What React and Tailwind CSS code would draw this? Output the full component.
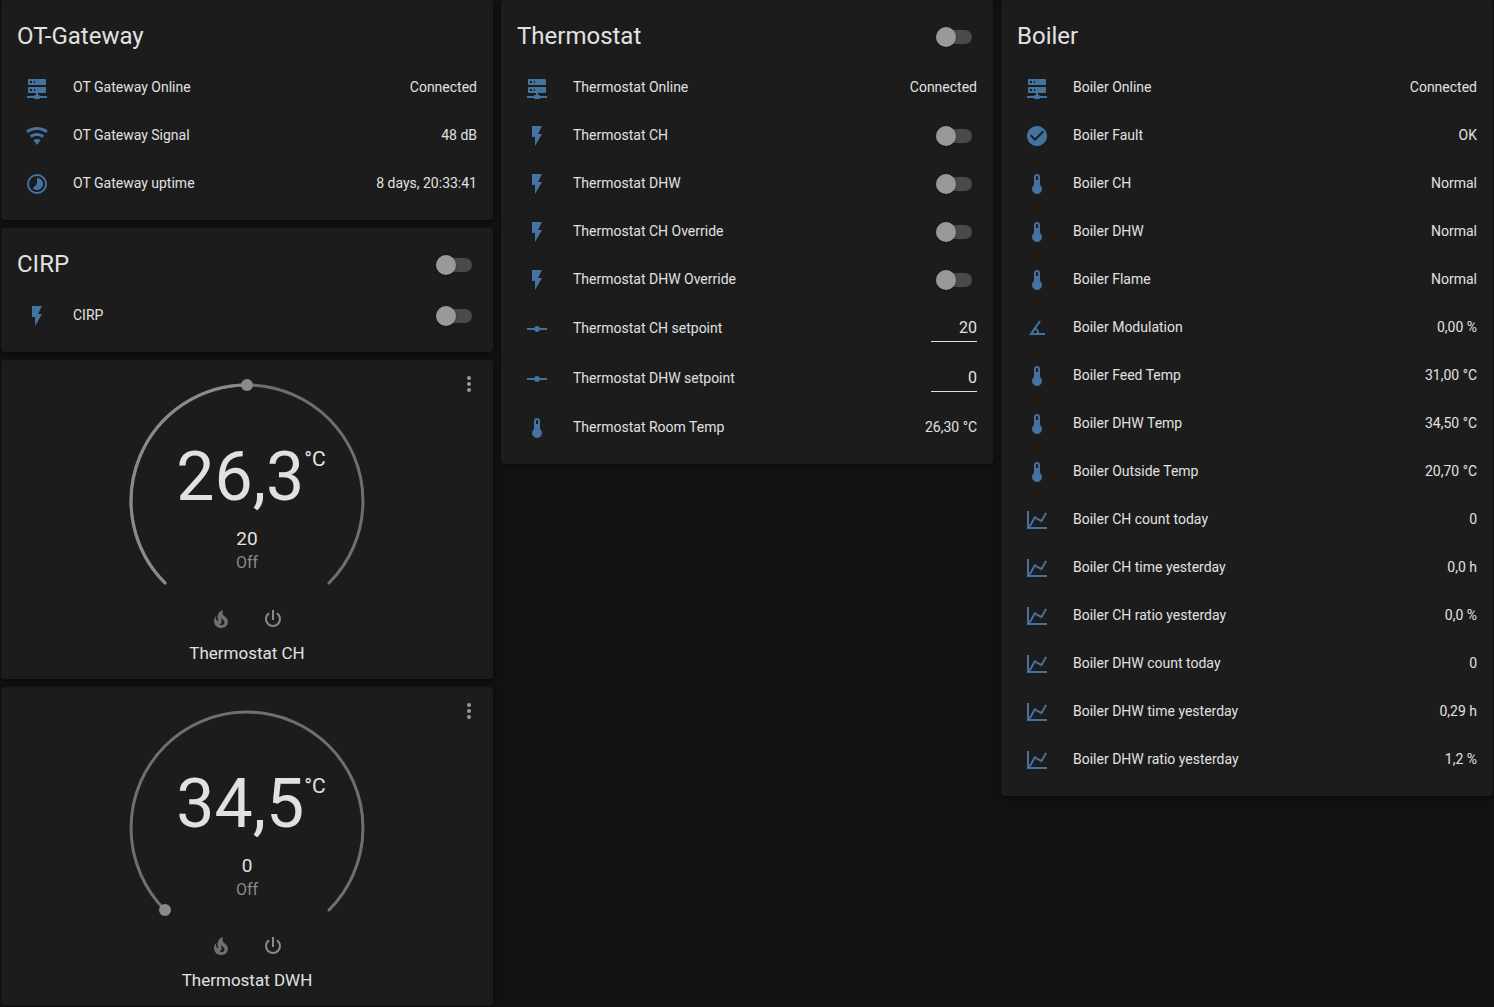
import React, { useId } from "react";

const ICONS = {
  server:
    "M13,19H14A1,1 0 0,1 15,20H22V22H15A1,1 0 0,1 14,23H10A1,1 0 0,1 9,22H2V20H9A1,1 0 0,1 10,19H11V17H4A1,1 0 0,1 3,16V12A1,1 0 0,1 4,11H20A1,1 0 0,1 21,12V16A1,1 0 0,1 20,17H13V19M4,3H20A1,1 0 0,1 21,4V8A1,1 0 0,1 20,9H4A1,1 0 0,1 3,8V4A1,1 0 0,1 4,3M9,7H10V5H9V7M9,15H10V13H9V15M5,5V7H7V5H5M5,13V15H7V13H5Z",
  wifi: "M12,21L15.6,16.2C14.6,15.45 13.35,15 12,15C10.65,15 9.4,15.45 8.4,16.2L12,21M12,3C7.95,3 4.21,4.34 1.2,6.6L3,9C5.5,7.12 8.62,6 12,6C15.38,6 18.5,7.12 21,9L22.8,6.6C19.79,4.34 16.05,3 12,3M12,9C9.3,9 6.81,9.89 4.8,11.4L6.6,13.8C8.1,12.67 9.97,12 12,12C14.03,12 15.9,12.67 17.4,13.8L19.2,11.4C17.19,9.89 14.7,9 12,9Z",
  timelapse:
    "M16.24,7.76C15.07,6.58 13.53,6 12,6V12L7.76,16.24C10.1,18.58 13.9,18.58 16.24,16.24C18.59,13.9 18.59,10.1 16.24,7.76M12,2A10,10 0 0,0 2,12A10,10 0 0,0 12,22A10,10 0 0,0 22,12A10,10 0 0,0 12,2M12,20A8,8 0 0,1 4,12A8,8 0 0,1 12,4A8,8 0 0,1 20,12A8,8 0 0,1 12,20Z",
  flash: "M7,2V13H10V22L17,10H13L17,2H7Z",
  ray: "M2,11H9.17C9.58,9.83 10.69,9 12,9C13.31,9 14.42,9.83 14.83,11H22V13H14.83C14.42,14.17 13.31,15 12,15C10.69,15 9.58,14.17 9.17,13H2V11Z",
  thermometer:
    "M15,13V5A3,3 0 0,0 9,5V13A5,5 0 1,0 15,13M12,4A1,1 0 0,1 13,5V8H11V5A1,1 0 0,1 12,4Z",
  check:
    "M12 2C6.5 2 2 6.5 2 12S6.5 22 12 22 22 17.5 22 12 17.5 2 12 2M10 17L5 12L6.41 10.59L10 14.17L17.59 6.58L19 8L10 17Z",
  angle:
    "M20,19H4.09L14.18,4.43L15.82,5.57L11.28,12.13C12.89,12.96 14,14.62 14,16.54C14,16.7 14,16.85 13.97,17H20V19M7.91,17H11.96C12,16.85 12,16.7 12,16.54C12,15.28 11.24,14.22 10.14,13.78L7.91,17Z",
  chart:
    "M16,11.78L20.24,4.45L21.97,5.45L16.74,14.5L10.23,10.75L5.46,19H22V21H2V3H4V17.54L9.5,8L16,11.78Z",
  fire: "M17.66 11.2C17.43 10.9 17.15 10.64 16.89 10.38C16.22 9.78 15.46 9.35 14.82 8.72C13.33 7.26 13 4.85 13.95 3C13 3.23 12.17 3.75 11.46 4.32C8.87 6.4 7.85 10.07 9.07 13.22C9.11 13.32 9.15 13.42 9.15 13.55C9.15 13.77 9 13.97 8.8 14.05C8.57 14.15 8.33 14.09 8.14 13.93C8.08 13.88 8.04 13.83 8 13.76C6.87 12.33 6.69 10.28 7.45 8.64C5.78 10 4.87 12.3 5 14.47C5.06 14.97 5.12 15.47 5.29 15.97C5.43 16.57 5.7 17.17 6 17.7C7.08 19.43 8.95 20.67 10.96 20.92C13.1 21.19 15.39 20.8 17.03 19.32C18.86 17.66 19.5 15 18.56 12.72L18.43 12.46C18.22 12 17.66 11.2 17.66 11.2M14.5 17.5C14.22 17.74 13.76 18 13.4 18.1C12.28 18.5 11.16 17.94 10.5 17.28C11.69 17 12.4 16.12 12.61 15.23C12.78 14.43 12.46 13.77 12.33 13C12.21 12.26 12.23 11.63 12.5 10.94C12.69 11.32 12.89 11.7 13.13 12C13.9 13 15.11 13.44 15.37 14.8C15.41 14.94 15.43 15.08 15.43 15.23C15.46 16.05 15.1 16.95 14.5 17.5H14.5Z",
  power:
    "M16.56,5.44L15.11,6.89C16.84,7.94 18,9.83 18,12A6,6 0 0,1 12,18A6,6 0 0,1 6,12C6,9.83 7.16,7.94 8.88,6.88L7.44,5.44C5.36,6.88 4,9.28 4,12A8,8 0 0,0 12,20A8,8 0 0,0 20,12C20,9.28 18.64,6.88 16.56,5.44M13,3H11V13H13",
  dots: "M12,16A2,2 0 0,1 14,18A2,2 0 0,1 12,20A2,2 0 0,1 10,18A2,2 0 0,1 12,16M12,10A2,2 0 0,1 14,12A2,2 0 0,1 12,14A2,2 0 0,1 10,12A2,2 0 0,1 12,10M12,4A2,2 0 0,1 14,6A2,2 0 0,1 12,8A2,2 0 0,1 10,6A2,2 0 0,1 12,4Z",
};

function Icon({ name }) {
  return (
    <svg viewBox="0 0 24 24" className="size-6 shrink-0 fill-current" aria-hidden="true">
      <path d={ICONS[name]} />
    </svg>
  );
}

function Toggle(props) {
  return (
    <input
      type="checkbox"
      role="switch"
      className="relative mr-[5px] h-[14px] w-9 shrink-0 cursor-pointer appearance-none rounded-full bg-[#4a4a4a] before:absolute before:-top-[3px] before:left-0 before:size-5 before:rounded-full before:bg-[#999999] before:shadow-[0_1px_3px_rgba(0,0,0,0.3)] checked:before:left-4"
      {...props}
    />
  );
}

function Card({ className = "", children }) {
  return (
    <section
      className={
        "rounded bg-[#1c1c1c] shadow-[0_2px_2px_rgba(0,0,0,0.14),0_1px_5px_rgba(0,0,0,0.12),0_3px_1px_-2px_rgba(0,0,0,0.2)] " +
        className
      }
    >
      {children}
    </section>
  );
}

function Row({ icon, label, value, kind = "text" }) {
  const id = useId();
  return (
    <li className={"flex items-center " + (kind === "number" ? "h-[42px]" : "h-10")}>
      <span className="flex w-10 shrink-0 justify-center text-[#44739e]">
        <Icon name={icon} />
      </span>
      {kind === "text" ? (
        <>
          <span className="ml-4 flex-1 truncate pb-0.5">{label}</span>
          <span className="ml-2 pb-0.5">{value}</span>
        </>
      ) : (
        <label htmlFor={id} className="ml-4 flex-1 truncate pb-0.5">
          {label}
        </label>
      )}
      {kind === "toggle" && <Toggle id={id} />}
      {kind === "number" && (
        <input
          id={id}
          type="text"
          inputMode="decimal"
          defaultValue={value}
          className="h-[26px] w-[46px] border-b border-[#e1e1e1] bg-transparent pb-[3px] text-right text-base leading-[22px] outline-none"
        />
      )}
    </li>
  );
}

function EntitiesCard({ title, toggle, rows }) {
  return (
    <Card className="px-4 pt-3 pb-4">
      <header className="flex h-[50px] items-center justify-between mb-1.5">
        <h2 className="pb-0.5 text-2xl">{title}</h2>
        {toggle && <Toggle aria-label={title} />}
      </header>
      <ul className="flex flex-col gap-2">
        {rows.map((row) => (
          <Row key={row.label} {...row} />
        ))}
      </ul>
    </Card>
  );
}

function ThermostatCard({ name, current, target, handle }) {
  const started = handle === "top";
  return (
    <Card className="relative flex flex-col items-center pt-[22px] pb-4">
      <button
        type="button"
        aria-label="More options"
        className="absolute top-0 right-0 flex size-12 items-center justify-center text-[#9b9b9b]"
      >
        <Icon name="dots" />
      </button>
      <div className="grid justify-items-center">
        <svg
          viewBox="0 0 240 213"
          className="col-start-1 row-start-1 w-60 overflow-visible"
          fill="none"
          aria-hidden="true"
        >
          <g strokeWidth="3" strokeLinecap="round">
            <path d="M38 201A116 116 0 1 1 202 201" stroke="#6f6f6f" />
            {started && <path d="M38 201A116 116 0 0 1 120 3" stroke="#8a8a8a" />}
          </g>
          <circle cx={started ? 120 : 38} cy={started ? 3 : 201} r="6" fill="#8a8a8a" />
        </svg>
        <div className="col-start-1 row-start-1 flex flex-col items-center pt-[59px]">
          <p className="flex items-start pl-2 text-[68px] leading-[72px]">
            {current}
            <span className="pt-1.5 text-[21px] leading-6">°C</span>
          </p>
          <p className="mt-3.5 text-[19px] leading-6">{target}</p>
          <p className="text-base leading-6 text-[#8a8a8a]">Off</p>
        </div>
      </div>
      <div className="flex gap-1">
        <button type="button" aria-label="Heat" className="flex size-12 items-center justify-center text-[#6f6f6f]">
          <Icon name="fire" />
        </button>
        <button type="button" aria-label="Off" className="flex size-12 items-center justify-center text-[#8a8a8a]">
          <Icon name="power" />
        </button>
      </div>
      <h2 className="text-[17px] leading-5">{name}</h2>
    </Card>
  );
}

const gateway = [
  { icon: "server", label: "OT Gateway Online", value: "Connected" },
  { icon: "wifi", label: "OT Gateway Signal", value: "48 dB" },
  { icon: "timelapse", label: "OT Gateway uptime", value: "8 days, 20:33:41" },
];

const cirp = [{ icon: "flash", label: "CIRP", kind: "toggle" }];

const thermostat = [
  { icon: "server", label: "Thermostat Online", value: "Connected" },
  { icon: "flash", label: "Thermostat CH", kind: "toggle" },
  { icon: "flash", label: "Thermostat DHW", kind: "toggle" },
  { icon: "flash", label: "Thermostat CH Override", kind: "toggle" },
  { icon: "flash", label: "Thermostat DHW Override", kind: "toggle" },
  { icon: "ray", label: "Thermostat CH setpoint", value: "20", kind: "number" },
  { icon: "ray", label: "Thermostat DHW setpoint", value: "0", kind: "number" },
  { icon: "thermometer", label: "Thermostat Room Temp", value: "26,30 °C" },
];

const boiler = [
  { icon: "server", label: "Boiler Online", value: "Connected" },
  { icon: "check", label: "Boiler Fault", value: "OK" },
  { icon: "thermometer", label: "Boiler CH", value: "Normal" },
  { icon: "thermometer", label: "Boiler DHW", value: "Normal" },
  { icon: "thermometer", label: "Boiler Flame", value: "Normal" },
  { icon: "angle", label: "Boiler Modulation", value: "0,00 %" },
  { icon: "thermometer", label: "Boiler Feed Temp", value: "31,00 °C" },
  { icon: "thermometer", label: "Boiler DHW Temp", value: "34,50 °C" },
  { icon: "thermometer", label: "Boiler Outside Temp", value: "20,70 °C" },
  { icon: "chart", label: "Boiler CH count today", value: "0" },
  { icon: "chart", label: "Boiler CH time yesterday", value: "0,0 h" },
  { icon: "chart", label: "Boiler CH ratio yesterday", value: "0,0 %" },
  { icon: "chart", label: "Boiler DHW count today", value: "0" },
  { icon: "chart", label: "Boiler DHW time yesterday", value: "0,29 h" },
  { icon: "chart", label: "Boiler DHW ratio yesterday", value: "1,2 %" },
];

export default function App() {
  return (
    <main className="grid min-h-screen grid-cols-3 items-start gap-2 bg-[#111111] px-px font-['Roboto',sans-serif] text-sm text-[#e1e1e1]">
      <div className="flex flex-col gap-2">
        <EntitiesCard title="OT-Gateway" rows={gateway} />
        <EntitiesCard title="CIRP" toggle rows={cirp} />
        <ThermostatCard name="Thermostat CH" current="26,3" target="20" handle="top" />
        <ThermostatCard name="Thermostat DWH" current="34,5" target="0" handle="start" />
      </div>
      <EntitiesCard title="Thermostat" toggle rows={thermostat} />
      <EntitiesCard title="Boiler" rows={boiler} />
    </main>
  );
}
